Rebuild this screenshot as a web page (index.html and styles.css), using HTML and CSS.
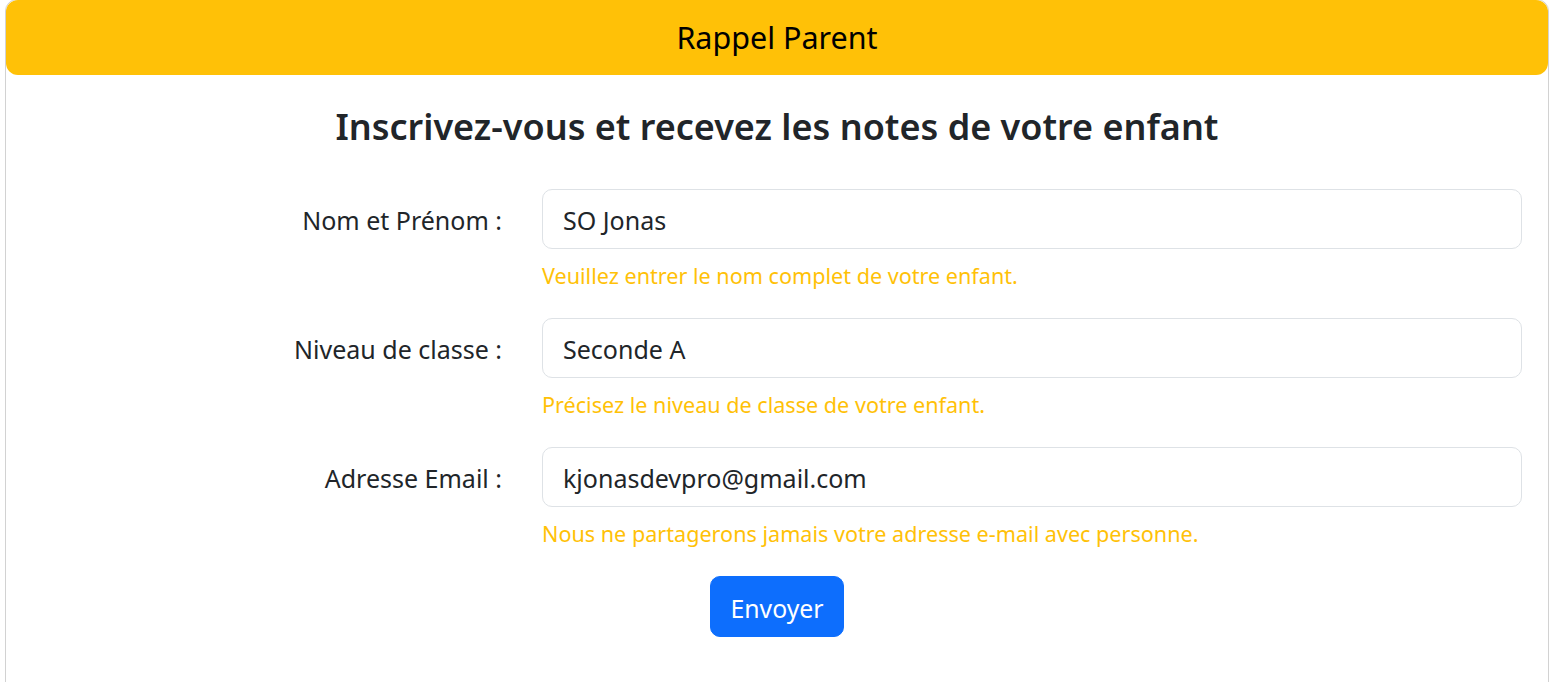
FILE: index.html
```html
<!DOCTYPE html>
<html lang="fr">
<head>
<meta charset="utf-8">
<title>Rappel Parent</title>
<link rel="stylesheet" href="styles.css">
</head>
<body>
<div class="card">
  <div class="card-header">
    <h3 class="brand">Rappel Parent</h3>
  </div>
  <div class="card-body">
    <h2 class="title">Inscrivez-vous et recevez les notes de votre enfant</h2>
    <form class="form">
      <div class="row">
        <label class="label" for="nom">Nom et Prénom :</label>
        <div class="control">
          <input class="input" id="nom" type="text" value="SO Jonas">
          <div class="help">Veuillez entrer le nom complet de votre enfant.</div>
        </div>
      </div>
      <div class="row">
        <label class="label" for="niveau">Niveau de classe :</label>
        <div class="control">
          <input class="input" id="niveau" type="text" value="Seconde A">
          <div class="help">Précisez le niveau de classe de votre enfant.</div>
        </div>
      </div>
      <div class="row">
        <label class="label" for="email">Adresse Email :</label>
        <div class="control">
          <input class="input" id="email" type="email" value="kjonasdevpro@gmail.com">
          <div class="help">Nous ne partagerons jamais votre adresse e-mail avec personne.</div>
        </div>
      </div>
      <div class="actions">
        <button class="btn" type="button">Envoyer</button>
      </div>
    </form>
  </div>
</div>
</body>
</html>
```
FILE: styles.css
```css
* { box-sizing: border-box; }
html, body { margin: 0; padding: 0; background: #fff; }
body {
  font-family: "Noto Sans", "Open Sans", sans-serif;
  color: #212529;
  overflow: hidden;
}
.card {
  margin: -1px 14px 0 5px;
  border: 1px solid #d2d2d2;
  border-radius: 12px;
  height: 720px;
  background: #fff;
}
.card-header {
  background: #ffc107;
  border-radius: 12px;
  height: 75px;
  display: flex;
  align-items: center;
  justify-content: center;
}
.brand {
  margin: 0 0 2px;
  font-size: 30.5px;
  font-weight: 400;
  line-height: 40px;
  color: #000;
}
.card-body { padding: 0; }
.title {
  margin: 28px 0 38px;
  text-align: center;
  font-size: 36px;
  font-weight: 600;
  line-height: 48px;
  color: #212529;
}
.row {
  display: grid;
  grid-template-columns: 1fr 980px;
  column-gap: 40px;
  margin: 0 26px 27px 0;
}
.label {
  text-align: right;
  font-size: 25px;
  line-height: 62px;
  color: #212529;
}
.input {
  display: block;
  width: 100%;
  height: 60px;
  padding: 2px 20px 0;
  font-family: inherit;
  font-size: 25px;
  color: #212529;
  border: 1px solid #dee2e6;
  border-radius: 10px;
  background: #fff;
  outline: none;
}
.help {
  margin-top: 12px;
  font-size: 21.6px;
  line-height: 30px;
  color: #ffc107;
}
.actions {
  display: flex;
  justify-content: center;
}
.btn {
  width: 134px;
  height: 61px;
  background: #0d6efd;
  color: #fff;
  border: 1px solid #0d6efd;
  border-radius: 10px;
  font-family: inherit;
  font-size: 24.8px;
  cursor: pointer;
  padding: 2px 0 0;
}
```
